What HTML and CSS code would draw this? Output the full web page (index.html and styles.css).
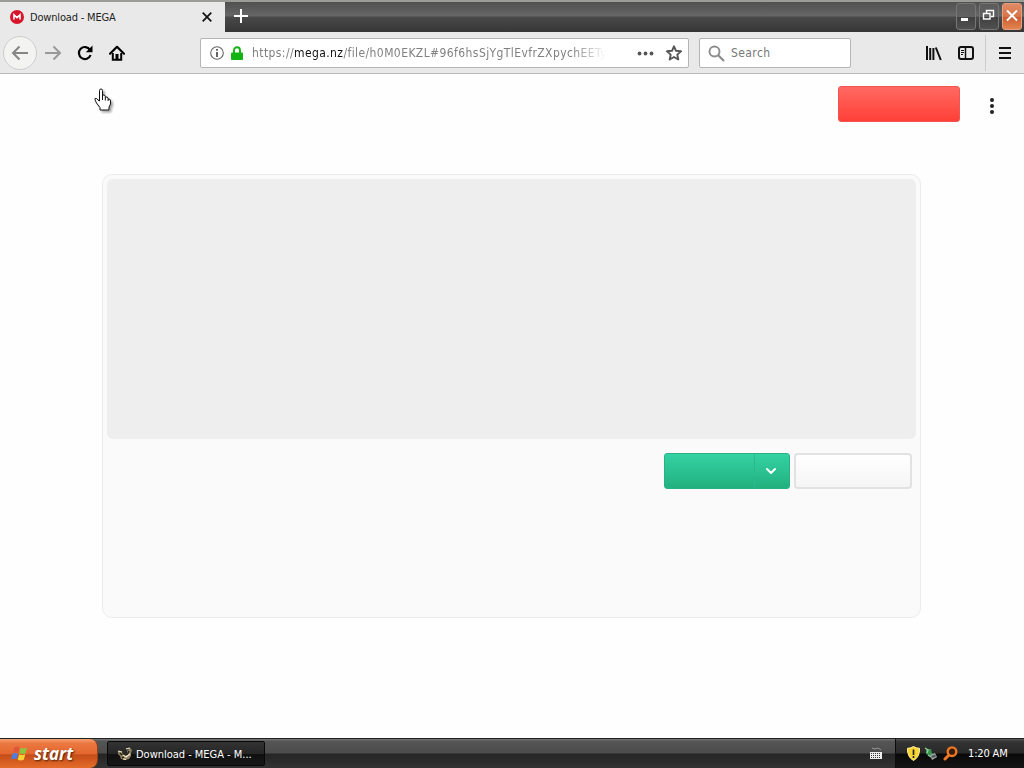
FILE: index.html
```html
<!DOCTYPE html>
<html lang="en">
<head>
	<meta charset="utf-8">
	<title>Download - MEGA</title>
	<link rel="stylesheet" href="styles.css">
</head>
<body>

<div class="titlebar">
	<div class="tab">
		<svg class="favicon" width="14" height="14" viewBox="0 0 14 14"><circle cx="7" cy="7" r="7" fill="#d9142a"/><path d="M4 9.6V4.8l3 2.8 3-2.8v4.8" fill="none" stroke="#fff" stroke-width="1.6"/></svg>
		<span class="tabtitle">Download - MEGA</span>
		<svg class="tabclose" width="10" height="10" viewBox="0 0 10 10"><path d="M.7.7l8.6 8.6M9.3.7L.7 9.3" stroke="#111" stroke-width="1.7"/></svg>
	</div>
	<svg class="newtab" width="14" height="14" viewBox="0 0 14 14"><path d="M7 0v14M0 7h14" stroke="#fff" stroke-width="2"/></svg>
	<div class="winbuttons">
		<div class="winbutton"><svg width="18" height="25" viewBox="0 0 18 25"><path d="M4 14h7v3H4z" fill="#fff"/></svg></div>
		<div class="winbutton"><svg width="18" height="25" viewBox="0 0 18 25"><path d="M6.500 9V6.500h7v6H11M3.500 9.500h6.500v5.500H3.500z" fill="none" stroke="#fff" stroke-width="1.400"/></svg></div>
		<div class="winbutton close"><svg width="18" height="25" viewBox="0 0 18 25"><path d="M4 6.500l10 10M14 6.500l-10 10" stroke="#fff" stroke-width="1.900"/></svg></div>
	</div>
</div>

<div class="toolbar">
	<div class="back"><svg width="18" height="16" viewBox="0 0 18 16"><path d="M17 8H2M8.500 1.500L2 8l6.500 6.500" fill="none" stroke="#858585" stroke-width="2"/></svg></div>
	<svg class="forward" width="18" height="16" viewBox="0 0 18 16"><path d="M1 8h15M9.500 1.500L16 8l-6.500 6.500" fill="none" stroke="#999" stroke-width="2"/></svg>
	<svg class="reload" width="16" height="16" viewBox="0 0 16 16"><path d="M13 4.800A6 6 0 1 0 13.600 10" fill="none" stroke="#000" stroke-width="2.200"/><path d="M15.500.5v6.700H8.800z"/></svg>
	<svg class="home" width="16" height="16" viewBox="0 0 16 16"><path d="M1 8.700L8 1.800l7 6.900" fill="none" stroke="#000" stroke-width="2.200" stroke-linecap="round" stroke-linejoin="round"/><path d="M3.800 8v6.800h8.400V8" fill="none" stroke="#000" stroke-width="2"/><path d="M6.500 9h3v6h-3z"/></svg>
	<div class="urlbar">
		<svg class="info" width="14" height="14" viewBox="0 0 14 14"><circle cx="7" cy="7" r="6.300" fill="none" stroke="#666" stroke-width="1.100"/><path d="M6.100 3h1.800v1.700H6.100zM6.100 6h1.800v5H6.100z" fill="#555"/></svg>
		<svg class="lock" width="12" height="14" viewBox="0 0 12 14"><path d="M3 7V4.200a3 3 0 0 1 6 0V7" fill="none" stroke="#12b312" stroke-width="1.900"/><rect y="6.500" width="12" height="7.500" rx="1" fill="#12b312"/></svg>
		<div class="url">https://<b>mega.nz</b>/file/h0M0EKZL#96f6hsSjYgTlEvfrZXpychEETy</div>
		<svg class="dots" width="17" height="5" viewBox="0 0 17 5"><g fill="#555"><circle cx="2.500" cy="2.500" r="1.900"/><circle cx="8.500" cy="2.500" r="1.900"/><circle cx="14.500" cy="2.500" r="1.900"/></g></svg>
		<svg class="star" width="16" height="16" viewBox="0 0 16 16"><path d="M8 1.300l2 4.500 5 .5-3.700 3.300 1 4.900L8 12l-4.300 2.500 1-4.900L1 6.300l5-.5z" fill="none" stroke="#555" stroke-width="1.900" stroke-linejoin="round"/></svg>
	</div>
	<div class="search">
		<svg width="17" height="17" viewBox="0 0 17 17"><circle cx="6.500" cy="6.500" r="5" fill="none" stroke="#8c8c8c" stroke-width="1.900"/><path d="M10 10l6 6" stroke="#8c8c8c" stroke-width="2.200"/></svg>
		<span>Search</span>
	</div>
	<svg class="library" width="16" height="15" viewBox="0 0 16 15"><path d="M1 0v14M4.200 2v12M7.400 2v12M9.800 1.500l5 12.500" fill="none" stroke="#111" stroke-width="2"/></svg>
	<svg class="sidebar" width="16" height="14" viewBox="0 0 16 14"><rect x="1" y="1" width="14" height="12" rx="2" fill="none" stroke="#111" stroke-width="2"/><path d="M7.500 1v12" stroke="#111" stroke-width="1.500"/><path d="M3 4.500h3M3 6.500h3M3 8.500h2" stroke="#111"/></svg>
	<div class="menu"><svg width="12" height="12" viewBox="0 0 12 12"><path d="M0 1h12M0 6h12M0 11h12" stroke="#111" stroke-width="2"/></svg></div>
</div>

<div class="page">
	<div class="topbar">
		<div class="redbutton"></div>
		<svg width="6" height="18" viewBox="0 0 6 18"><g fill="#222"><circle cx="3" cy="3" r="2"/><circle cx="3" cy="9" r="2"/><circle cx="3" cy="15" r="2"/></g></svg>
	</div>
	<div class="filebox">
		<div class="preview"></div>
		<div class="buttons">
			<div class="greenbutton">
				<div class="arrow"><svg width="12" height="8" viewBox="0 0 12 8"><path d="M2 2l4 4 4-4" fill="none" stroke="#fff" stroke-width="2" stroke-linecap="round" stroke-linejoin="round"/></svg></div>
			</div>
			<div class="whitebutton"></div>
		</div>
	</div>
	<svg class="pointer" width="20" height="24" viewBox="0 0 20 24"><path d="M5.500 13V2.500q0-1.500 1.500-1.500t1.500 1.500V8V7q2.700-.5 2.800 1.500V9q2.500-.6 2.800 1.500v.5q2.400-.4 2.400 2V16l-1.500 3v3h-9v-2.500L2.500 15Q.4 11 1 10.500q1.700-.7 3 1.500z" fill="#fff" stroke="#111"/><path d="M8.500 7v5M11.300 9v3.500M14.100 11v2" stroke="#111"/></svg>
</div>

<div class="taskbar">
	<div class="start">
		<svg width="19" height="17" viewBox="0 0 19 17"><path d="M4.200 2.500q3-2 5.300-.3L8.200 7.700Q5.500 6.300 2.800 8z" fill="#e2553c"/><path d="M10.500 2.700q3 1.500 6.500-.2l-1.500 5.700q-3 1.500-6.200 0z" fill="#8cc63f"/><path d="M2.500 9q2.700-1.700 5.500-.2l-1.300 5.400Q4 12.800 1 14.500z" fill="#4c7fe0"/><path d="M9 9.300q3.200 1.400 6.300 0l-1.500 5.500q-3 1.500-6.100 0z" fill="#f8d034"/></svg>
		<span>start</span>
	</div>
	<div class="task">
		<svg width="16" height="16" viewBox="0 0 16 16"><path d="M1 5l4 1 1 3 4-1V5l3-3 2 2-1 3v3l-2 3-4 1-4-1-1-3-2-2z" fill="#8f8060"/><path d="M3 7l2 2M7 10l3-2M12 5l-2 4M5 12l2-1" stroke="#27221a" stroke-width="1.500"/><path d="M1 5l4 1M6 9l3 2 4-3M9 3l4-1M6 13l3 .500" fill="none" stroke="#f4e9cc" stroke-width="1.200"/></svg>
		<span>Download - MEGA - M...</span>
	</div>
	<svg class="keyboard" width="14" height="13" viewBox="0 0 14 13"><path d="M3 1l3 1 3-1 3 2" fill="none" stroke="#999"/><rect x="1" y="5" width="12" height="7" fill="#eee"/><path d="M2 6.500h10M2 8.500h10M2 10.500h10" stroke="#333" stroke-dasharray="1 1"/></svg>
	<div class="tray">
		<svg width="13" height="15" viewBox="0 0 13 15"><path d="M6.500.5Q9 2.300 12.500 2.300 13 11 6.500 14.500 0 11 .5 2.300 4 2.300 6.500.5z" fill="#fbd52f" stroke="#fff0a0"/><path d="M6.500 3.500V9M6.500 10v2" stroke="#222" stroke-width="1.700"/></svg>
		<svg width="15" height="16" viewBox="0 0 15 16"><path d="M2 3h5l1 4 2 1-4 2-4-2z" fill="#369348"/><path d="M1 2l3 2-1 3M4 9l3 2" fill="none" stroke="#91cba0" stroke-width="1.500"/><path d="M6 9l5-2 2 4-5 3z" fill="#a3aaa9"/><path d="M7 10l4-1.500 1 2L8.500 12z" fill="#4b5756"/></svg>
		<svg width="15" height="15" viewBox="0 0 15 15"><circle cx="9" cy="5.700" r="4.300" fill="#3a1c0b" stroke="#ef7924" stroke-width="2.400"/><path d="M5.500 9.500l-3.500 3.500" stroke="#ef7924" stroke-width="3" stroke-linecap="round"/></svg>
		<span>1:20 AM</span>
	</div>
</div>

</body>
</html>
```
FILE: styles.css
```css
* {
	box-sizing: border-box;
}
body {
	margin: 0;
	width: 1024px;
	height: 768px;
	overflow: hidden;
	display: flex;
	flex-direction: column;
	background-color: #fefefe;
	font-family: "DejaVu Sans Condensed", "Noto Sans", sans-serif;
	font-size: 11px;
}
svg {
	display: block;
	flex: none;
}

/* window title bar */
.titlebar {
	height: 32px;
	display: flex;
	flex: none;
	align-items: center;
	border-top: 2px solid #9a9c98;
	background: linear-gradient(#505050, #666 45%, #484848 52%, #363636);
}
.tab {
	width: 225px;
	height: 30px;
	display: flex;
	align-items: center;
	padding: 0 13px 0 10px;
	background-color: #e9e9e9;
}
.tabtitle {
	margin-left: 6px;
	color: #222;
	letter-spacing: -0.18px;
	white-space: nowrap;
}
.tabclose {
	margin-left: auto;
}
.newtab {
	margin: 0 0 2px 9px;
}
.winbuttons {
	display: flex;
	gap: 3px;
	margin: 0 2px 2px auto;
}
.winbutton {
	width: 20px;
	height: 27px;
	border: 1px solid #777;
	border-radius: 3px;
	background: linear-gradient(#5b5b5b, #626262 50%, #404040 52%, #505050);
}
.winbutton.close {
	border-color: #e5a080;
	background: linear-gradient(#e08a64, #d8744a 50%, #cb5b30 52%, #e28450);
}

/* navigation */
.toolbar {
	height: 42px;
	flex: none;
	display: flex;
	align-items: center;
	padding: 1px 0 0 3px;
	background-color: #e9e9e9;
	border-bottom: 1px solid #b9b9b9;
}
.back {
	width: 34px;
	height: 34px;
	flex: none;
	display: flex;
	align-items: center;
	justify-content: center;
	background-color: #f3f4f2;
	border: 1px solid #ccc;
	border-radius: 50%;
}
.forward {
	margin-left: 7px;
}
.reload {
	margin-left: 15px;
}
.home {
	margin-left: 16px;
}
.urlbar, .search {
	height: 30px;
	flex: none;
	display: flex;
	align-items: center;
	background-color: #fff;
	border: 1px solid #b5b5b5;
	border-radius: 2px;
}
.urlbar {
	width: 489px;
	margin-left: 75px;
	padding-left: 9px;
}
.lock {
	margin-left: 7px;
}
.url {
	width: 356px;
	margin-left: 9px;
	overflow: hidden;
	white-space: nowrap;
	color: #808080;
	font-size: 12px;
	letter-spacing: 0.41px;
	-webkit-mask-image: linear-gradient(90deg, #000 320px, transparent 354px);
}
.url b {
	font-weight: normal;
	color: #111;
}
.dots {
	margin-left: 29px;
}
.star {
	margin-left: 12px;
}
.search {
	width: 152px;
	margin-left: 10px;
	padding-left: 8px;
	color: #777;
	font-size: 12px;
}
.search span {
	margin-left: 6px;
	letter-spacing: 0.4px;
}
.library {
	margin-left: 75px;
}
.sidebar {
	margin-left: 16px;
}
.menu {
	height: 36px;
	margin-left: 11px;
	padding-left: 13px;
	display: flex;
	align-items: center;
	border-left: 1px solid #ccc;
}

/* page */
.page {
	position: relative;
	height: 664px;
	flex: none;
}
.topbar {
	height: 100px;
	display: flex;
	align-items: flex-start;
	padding: 12px 29px 0 0;
	justify-content: flex-end;
	gap: 29px;
}
.topbar svg {
	margin-top: 11px;
}
.redbutton {
	width: 122px;
	height: 36px;
	border-radius: 3px;
	border: 1px solid #f2554f;
	background: linear-gradient(#ff6962, #ff4037);
}
.filebox {
	width: 819px;
	height: 444px;
	margin-left: 102px;
	padding: 4px;
	border: 1px solid #ececec;
	border-radius: 10px;
	background-color: #fafafa;
}
.preview {
	width: 809px;
	height: 260px;
	background-color: #eee;
	border-radius: 6px;
}
.buttons {
	display: flex;
	justify-content: flex-end;
	gap: 4px;
	padding: 14px 4px 0 0;
}
.greenbutton {
	width: 126px;
	height: 36px;
	display: flex;
	justify-content: flex-end;
	border: 1px solid #28b183;
	border-radius: 3px;
	background: linear-gradient(#34d1a3, #22b17f);
}
.arrow {
	width: 35px;
	display: flex;
	align-items: center;
	padding-left: 10px;
	border-left: 1px solid #29b98a;
}
.whitebutton {
	width: 118px;
	height: 36px;
	border: 2px solid #e2e2e2;
	border-radius: 4px;
	background: linear-gradient(#fff, #f5f5f5);
}
.pointer {
	position: absolute;
	left: 94px;
	top: 14px;
	filter: drop-shadow(2px 2px 1px rgba(0, 0, 0, .35));
}

/* taskbar */
.taskbar {
	height: 30px;
	flex: none;
	display: flex;
	align-items: center;
	color: #fff;
	border-top: 1px solid #222;
	background: linear-gradient(#777 0, #555 8%, #4c4c4c 48%, #252525 52%, #333);
}
.start {
	width: 98px;
	height: 29px;
	display: flex;
	align-items: center;
	padding-left: 10px;
	border-right: 1px solid #933e18;
	border-radius: 0 8px 8px 0;
	background: linear-gradient(#f5a070, #ec7841 15%, #e36830 50%, #c54d18 55%, #e46c2b);
}
.start span {
	margin: 0 0 1px 5px;
	font-family: "Open Sans", sans-serif;
	font-size: 17px;
	font-weight: bold;
	font-style: italic;
	text-shadow: 1px 1px 2px #502000;
}
.task {
	width: 158px;
	height: 25px;
	display: flex;
	align-items: center;
	margin-left: 9px;
	padding: 1px 0 0 9px;
	border: 1px solid #080808;
	border-radius: 2px;
	background: linear-gradient(#333, #262626 50%, #101010 52%, #171717);
}
.task span {
	margin-left: 3px;
	letter-spacing: -0.02px;
	white-space: nowrap;
}
.keyboard {
	margin-left: auto;
}
.tray {
	width: 129px;
	height: 29px;
	display: flex;
	align-items: center;
	gap: 4px;
	margin-left: 12px;
	padding-left: 11px;
	border-left: 1px solid #0c0c0c;
	background: linear-gradient(#555 0, #333 10%, #292929 48%, #090909 52%, #151515);
}
.tray span {
	margin-left: 6px;
	letter-spacing: -0.15px;
	white-space: nowrap;
}
```
